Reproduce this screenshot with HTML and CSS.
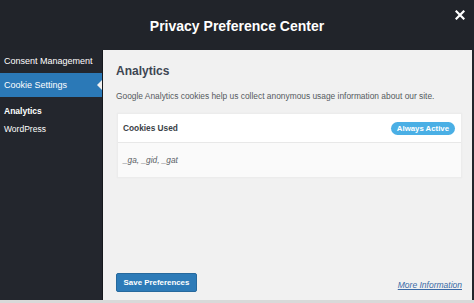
FILE: index.html
```html
<!DOCTYPE html>
<html lang="en">
<head>
<meta charset="utf-8">
<title>Privacy Preference Center</title>
<link rel="stylesheet" href="styles.css">
</head>
<body>
<div class="modal">
  <header class="modal-header">
    <h1 class="modal-title">Privacy Preference Center</h1>
    <button class="close" aria-label="Close">
      <svg viewBox="0 0 10 10" width="10" height="10"><path d="M1.5 1.5 L8.5 8.5 M8.5 1.5 L1.5 8.5" stroke="#fff" stroke-width="2.2" stroke-linecap="square"/></svg>
    </button>
  </header>
  <div class="modal-body">
    <nav class="sidebar">
      <a class="nav-item">Consent Management</a>
      <a class="nav-item active">Cookie Settings</a>
      <div class="subnav">
        <a class="sub-item current">Analytics</a>
        <a class="sub-item">WordPress</a>
      </div>
    </nav>
    <main class="panel">
      <h2 class="panel-title">Analytics</h2>
      <p class="panel-desc">Google Analytics cookies help us collect anonymous usage information about our site.</p>
      <section class="card">
        <div class="card-head">
          <span class="card-label">Cookies Used</span>
          <span class="pill">Always Active</span>
        </div>
        <div class="card-body">_ga, _gid, _gat</div>
      </section>
      <footer class="panel-footer">
        <button class="save">Save Preferences</button>
        <a class="more" href="#">More Information</a>
      </footer>
    </main>
  </div>
</div>
</body>
</html>
```

FILE: styles.css
```css
* { box-sizing: border-box; }
html, body { margin: 0; padding: 0; }
body {
  width: 474px;
  height: 303px;
  overflow: hidden;
  background: #d9d9d9;
  font-family: "Liberation Sans", Arial, sans-serif;
}
.modal {
  display: flex;
  flex-direction: column;
  height: 300px;
  background: #22252c;
}
.modal-header {
  height: 50px;
  flex: none;
  display: flex;
  align-items: center;
  justify-content: center;
  position: relative;
  background: #21242a;
}
.modal-title {
  margin: 0;
  font-size: 14px;
  font-weight: bold;
  color: #fff;
  line-height: 1;
  padding-top: 2px;
}
.close {
  position: absolute;
  right: 9px;
  top: 10px;
  padding: 0;
  border: 0;
  background: none;
  width: 10px;
  height: 10px;
  display: block;
}
.close svg { display: block; }
.modal-body {
  flex: 1;
  display: flex;
  min-height: 0;
}
.sidebar {
  width: 102px;
  flex: none;
  background: #23262d;
  display: flex;
  flex-direction: column;
  padding-top: 0;
}
.nav-item {
  display: block;
  color: #fff;
  font-size: 9px;
  line-height: 12px;
  padding: 5px 4px 6px;
  white-space: nowrap;
  position: relative;
}
.nav-item.active {
  background: #2b79b7;
  padding: 6px 4px 6px;
  height: 24px;
}
.nav-item.active::after {
  content: "";
  position: absolute;
  right: 0;
  top: 7px;
  border-style: solid;
  border-width: 5px 5px 5px 0;
  border-color: transparent #f1f1f1 transparent transparent;
}
.subnav {
  padding-top: 8px;
  display: flex;
  flex-direction: column;
  gap: 6px;
}
.sub-item {
  display: block;
  color: #fff;
  font-size: 8.5px;
  line-height: 12px;
  padding: 0 4px;
}
.sub-item.current { font-weight: bold; }
.panel {
  flex: 1;
  background: #f1f1f1;
  border-left: 1px solid #16181c;
  margin-right: 2px;
  display: flex;
  flex-direction: column;
  padding: 14px 10px 8px 13px;
}
.panel-title {
  margin: 0;
  font-size: 12px;
  font-weight: bold;
  color: #3e4653;
  line-height: 14px;
}
.panel-desc {
  margin: 12px 0 0;
  font-size: 8.4px;
  color: #555a60;
  line-height: 12px;
  white-space: nowrap;
}
.card {
  margin: 11px 0 0 1px;
  background: #fafafa;
  border: 1px solid #ececec;
  box-shadow: 0 0 1px rgba(0,0,0,0.05);
}
.card-head {
  height: 29px;
  background: #fff;
  display: flex;
  align-items: center;
  justify-content: space-between;
  padding: 0 6px 0 5px;
  border-bottom: 1px solid #e8e8e8;
}
.card-label {
  font-size: 8.3px;
  font-weight: bold;
  color: #3a3f46;
}
.pill {
  background: #4aafe5;
  color: #fff;
  font-size: 7.8px;
  font-weight: bold;
  line-height: 13px;
  height: 13px;
  padding: 0 6px;
  border-radius: 7px;
  white-space: nowrap;
}
.card-body {
  height: 34px;
  display: flex;
  align-items: center;
  padding: 0 5px;
  font-size: 8.3px;
  font-style: italic;
  color: #5a5f66;
}
.panel-footer {
  margin-top: auto;
  display: flex;
  align-items: center;
  justify-content: space-between;
}
.save {
  height: 19px;
  width: 81px;
  background: #2d7bb8;
  border: 1px solid #26699d;
  border-radius: 2px;
  color: #fff;
  font-family: inherit;
  font-size: 7.9px;
  font-weight: bold;
  padding: 0;
}
.more {
  font-size: 8.5px;
  font-style: italic;
  color: #3a6aa6;
  text-decoration: underline;
  margin-top: 4px;
}
```
